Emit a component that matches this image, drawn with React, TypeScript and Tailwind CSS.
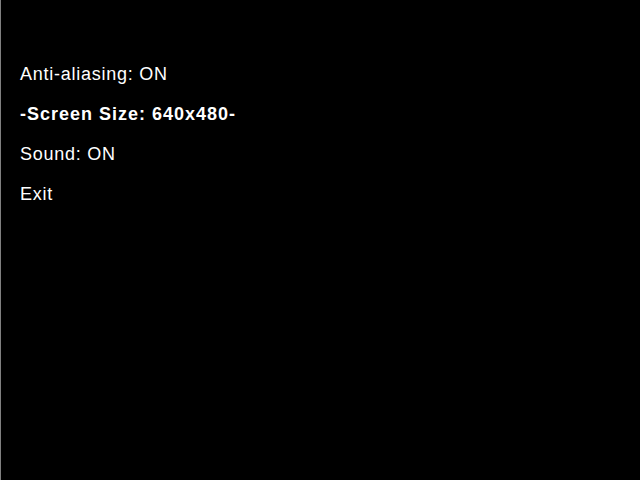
const items = [
  { label: 'Anti-aliasing: ON', active: false },
  { label: '-Screen Size: 640x480-', active: true },
  { label: 'Sound: ON', active: false },
  { label: 'Exit', active: false },
];

export default function App() {
  return (
    <div
      className="w-[640px] h-[480px] bg-black border-l border-[#808080] text-white pt-[61px] pl-[19px]"
      style={{ fontFamily: '"Liberation Sans", Arial, sans-serif' }}
    >
      <ul className="flex flex-col">
        {items.map((item) => (
          <li
            key={item.label}
            className={
              item.active
                ? 'h-[40px] leading-[26px] text-[18px] font-bold tracking-[1px]'
                : 'h-[40px] leading-[26px] text-[18px] tracking-[0.75px]'
            }
          >
            {item.label}
          </li>
        ))}
      </ul>
    </div>
  );
}
